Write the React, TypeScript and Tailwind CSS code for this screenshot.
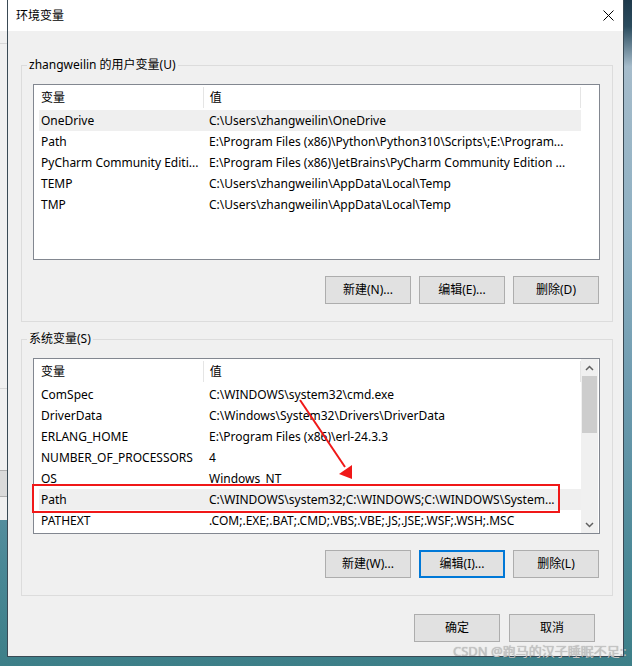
import React from "react";

type Row = { name: string; value: string; selected?: boolean };

const userRows: Row[] = [
  { name: "OneDrive", value: "C:\\Users\\zhangweilin\\OneDrive", selected: true },
  { name: "Path", value: "E:\\Program Files (x86)\\Python\\Python310\\Scripts\\;E:\\Program..." },
  { name: "PyCharm Community Editi...", value: "E:\\Program Files (x86)\\JetBrains\\PyCharm Community Edition ..." },
  { name: "TEMP", value: "C:\\Users\\zhangweilin\\AppData\\Local\\Temp" },
  { name: "TMP", value: "C:\\Users\\zhangweilin\\AppData\\Local\\Temp" },
];

const sysRows: Row[] = [
  { name: "ComSpec", value: "C:\\WINDOWS\\system32\\cmd.exe" },
  { name: "DriverData", value: "C:\\Windows\\System32\\Drivers\\DriverData" },
  { name: "ERLANG_HOME", value: "E:\\Program Files (x86)\\erl-24.3.3" },
  { name: "NUMBER_OF_PROCESSORS", value: "4" },
  { name: "OS", value: "Windows_NT" },
  { name: "Path", value: "C:\\WINDOWS\\system32;C:\\WINDOWS;C:\\WINDOWS\\System...", selected: true },
  { name: "PATHEXT", value: ".COM;.EXE;.BAT;.CMD;.VBS;.VBE;.JS;.JSE;.WSF;.WSH;.MSC" },
];

function Header() {
  return (
    <div className="flex h-[25px] shrink-0 bg-white">
      <div className="flex w-[169px] items-center pl-[7px]">变量</div>
      <div className="my-[2px] w-px bg-[#e5e5e5]" />
      <div className="flex w-[377px] items-center pl-[6px]">值</div>
      <div className="my-[2px] w-px bg-[#e5e5e5]" />
    </div>
  );
}

function Rows({ rows }: { rows: Row[] }) {
  return (
    <div className="flex flex-col">
      {rows.map((r, i) => (
        <div
          key={i}
          className={`ml-[5px] flex h-[21px] w-[542px] shrink-0 items-center whitespace-nowrap ${
            r.selected ? "bg-[#efefef]" : ""
          }`}
        >
          <div className="w-[163px] overflow-hidden pl-[2px]">{r.name}</div>
          <div className="flex-1 overflow-hidden pl-[7px]">{r.value}</div>
        </div>
      ))}
    </div>
  );
}

function Btn({ label, focused }: { label: string; focused?: boolean }) {
  return (
    <div
      className={`flex h-[28px] w-[86px] items-center justify-center bg-[#e1e1e1] ${
        focused ? "border-2 border-[#0078d7]" : "border border-[#adadad]"
      }`}
    >
      {label}
    </div>
  );
}

function Chevron({ up }: { up?: boolean }) {
  return (
    <svg width="9" height="6" viewBox="0 0 9 6">
      <path
        d={up ? "M1 5 L4.5 1.5 L8 5" : "M1 1 L4.5 4.5 L8 1"}
        fill="none"
        stroke="#606060"
        strokeWidth="1.5"
      />
    </svg>
  );
}

function Group({
  label,
  rows,
  buttons,
  scroll,
}: {
  label: string;
  rows: Row[];
  buttons: { label: string; focused?: boolean }[];
  scroll?: boolean;
}) {
  return (
    <div className="relative ml-[13px] w-[592px] border border-[#dcdcdc] pl-[11px] pr-[12px] pt-[18px] pb-[17px]">
      <div className="absolute left-[5px] top-[-10px] bg-[#f0f0f0] px-[2px] leading-[18px]">{label}</div>
      <div className="flex h-[176px] w-[567px] border border-[#828790] bg-white">
        <div className="flex w-[547px] flex-col overflow-hidden">
          <Header />
          <Rows rows={rows} />
        </div>
        {scroll ? (
          <div className="flex w-[17px] flex-col items-center bg-[#f0f0f0]">
            <div className="flex h-[17px] items-center justify-center pt-[1px]">
              <Chevron up />
            </div>
            <div className="h-[57px] w-[15px] bg-[#cdcdcd]" />
            <div className="flex-1" />
            <div className="flex h-[17px] items-center justify-center">
              <Chevron />
            </div>
          </div>
        ) : (
          <div className="w-[18px]" />
        )}
      </div>
      <div className="mt-[16px] flex justify-end gap-[8px] pr-px">
        {buttons.map((b, i) => (
          <Btn key={i} label={b.label} focused={b.focused} />
        ))}
      </div>
    </div>
  );
}

export default function App() {
  return (
    <div className="relative h-[666px] w-[632px] overflow-hidden bg-[linear-gradient(180deg,#1e3a4c_0%,#2b4c5e_4%,#a6bccb_10%,#8eb0c2_35%,#6c9aae_60%,#4a8896_85%,#3d7f88_100%)] font-['Noto_Sans','Noto_Sans_CJK_SC',sans-serif] text-[12px] text-black">
      <div className="flex">
        {/* background window strip */}
        <div className="flex h-[520px] w-[7px] flex-col bg-[#f0f0f0]">
          <div className="h-[31px] bg-white" />
          <div className="h-[12px]" />
          <div className="h-px bg-[#d8d8d8]" />
          <div className="h-[344px]" />
          <div className="h-px bg-[#d8d8d8]" />
          <div className="h-[81px]" />
          <div className="h-px bg-[#b0b0b0]" />
          <div className="h-[25px] bg-[#dadada]" />
          <div className="h-px bg-[#b0b0b0]" />
        </div>

        {/* dialog window */}
        <div className="flex h-[657px] w-[617px] flex-col border-x border-b border-[#3a4a55] bg-[#f0f0f0]">
          <div className="flex h-[31px] shrink-0 items-center justify-between bg-white pl-[8px] pr-[9px]">
            <span>环境变量</span>
            <svg width="11" height="11" viewBox="0 0 11 11">
              <path d="M0.5 0.5 L10.5 10.5 M10.5 0.5 L0.5 10.5" stroke="#000" strokeWidth="1" />
            </svg>
          </div>
          <div className="flex flex-col pt-[34px]">
            <Group
              label="zhangweilin 的用户变量(U)"
              rows={userRows}
              buttons={[{ label: "新建(N)..." }, { label: "编辑(E)..." }, { label: "删除(D)" }]}
            />
            <div className="h-[17px]" />
            <Group
              label="系统变量(S)"
              rows={sysRows}
              scroll
              buttons={[{ label: "新建(W)..." }, { label: "编辑(I)...", focused: true }, { label: "删除(L)" }]}
            />
            <div className="mr-[28px] mt-[18px] flex justify-end gap-[9px]">
              <Btn label="确定" />
              <Btn label="取消" />
            </div>
          </div>
        </div>
      </div>

      {/* red annotation */}
      <div className="absolute left-[32px] top-[484px] h-[29px] w-[528px] border-2 border-[#f01818]" />
      <svg className="absolute left-0 top-0" width="632" height="666" viewBox="0 0 632 666">
        <line x1="300" y1="400" x2="345" y2="467" stroke="#f01818" strokeWidth="2" />
        <polygon points="352,479 339,474 352,465" fill="#f01818" />
      </svg>

      {/* watermark */}
      <div className="absolute left-[453px] top-[641px] whitespace-nowrap text-[13px] leading-[20px] text-[#c4c4c4] [text-shadow:0_0_1px_rgba(0,0,0,0.3)]">
        CSDN @跑马的汉子睡眠不足::
      </div>
    </div>
  );
}
